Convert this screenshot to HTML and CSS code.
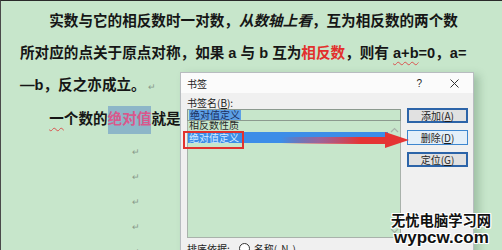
FILE: index.html
```html
<!DOCTYPE html>
<html lang="zh-CN">
<head>
    <meta charset="UTF-8" />
    <title>书签</title>
    <link rel="stylesheet" href="styles.css">
</head>
<body>
<div class="page">
    <div class="doc">
        <p class="para indent">实数与它的相反数时一对数，<span class="kai">从数轴上看</span>，互为相反数的两个数</p>
        <p class="para">所对应的点关于原点对称，如果 a 与 b 互为<span class="red">相反数</span>，则有 <span class="typo">a+b</span>=0，a=</p>
        <p class="para">—b，反之亦成立。<span class="mark">↵</span></p>
        <p class="para indent"><span class="typo">一</span>个数的<span class="hl">绝对值</span>就是数轴上</p>
        <div class="empties">
            <p class="empty"><span class="mark">↵</span></p>
            <p class="empty"><span class="mark">↵</span></p>
            <p class="empty"><span class="mark">↵</span></p>
            <p class="empty"><span class="mark">↵</span></p>
            <p class="empty"><span class="mark">↵</span></p>
        </div>
    </div>

    <div class="dialog">
        <div class="titlebar">
            <span class="title">书签</span>
            <span class="help">?</span>
            <svg class="close" width="9" height="9" viewBox="0 0 9 9"><path d="M0.5 0.5 L8.5 8.5 M8.5 0.5 L0.5 8.5" stroke="#333" stroke-width="1" fill="none"/></svg>
        </div>
        <div class="dlg-body">
            <div class="dlg-left">
                <div class="label">书签名(<u>B</u>):</div>
                <div class="name-input"><span class="sel">绝对值定义</span></div>
                <div class="listbox">
                    <div class="items">
                        <div class="item partial">相反数性质</div>
                        <div class="item selected">绝对值定义</div>
                    </div>
                    <div class="scroll">
                        <svg width="9" height="6" viewBox="0 0 9 6"><path d="M1 5 L4.5 1.5 L8 5" stroke="#a8b4aa" stroke-width="1.2" fill="none"/></svg>
                        <svg width="9" height="6" viewBox="0 0 9 6"><path d="M1 1 L4.5 4.5 L8 1" stroke="#a8b4aa" stroke-width="1.2" fill="none"/></svg>
                    </div>
                </div>
            </div>
            <div class="dlg-buttons">
                <button class="btn strong">添加(<u>A</u>)</button>
                <button class="btn hover">删除(<u>D</u>)</button>
                <button class="btn strong">定位(<u>G</u>)</button>
            </div>
            <div class="sort-row">排序依据: <span class="radio"></span> 名称(<u>N</u>)</div>
        </div>
    </div>

    <div class="redbox"></div>
    <svg class="arrow" width="172" height="20" viewBox="0 0 172 20">
        <defs>
            <linearGradient id="shaft" x1="0" x2="1" y1="0" y2="0">
                <stop offset="0" stop-color="#e23a3a" stop-opacity="0"/>
                <stop offset="0.35" stop-color="#d84a6a" stop-opacity="0.6"/>
                <stop offset="0.75" stop-color="#e53434"/>
                <stop offset="1" stop-color="#e53434"/>
            </linearGradient>
        </defs>
        <rect x="40" y="7" width="106" height="7" fill="url(#shaft)"/>
        <polygon points="144,2 168,10 144,18" fill="#e53434"/>
    </svg>

    <div class="watermark">
        <div class="wm-cn">无忧电脑学习网</div>
        <div class="wm-en">wypcw.com</div>
    </div>
</div>
</body>
</html>
```

FILE: styles.css
```css
html, body { margin: 0; padding: 0; }
body {
    width: 502px; height: 250px; overflow: hidden;
    background: #c7e6cb;
    font-family: "Liberation Sans", "Noto Sans CJK SC", sans-serif;
}
.page {
    position: relative; width: 502px; height: 250px; overflow: hidden;
    box-sizing: border-box; border-top: 1px solid #2a2a2a; border-left: 1px solid #4a4a4a;
}

/* document text */
.doc { padding: 4px 0 0 19px; font-size: 14.6px; font-weight: 700; color: #161616; }
.para { margin: 0; line-height: 32px; white-space: nowrap; }
.indent { text-indent: 2em; }
.kai { font-style: italic; }
.red { color: #e2302c; }
.typo { text-decoration: underline wavy #d9534f; text-decoration-thickness: 1px; text-underline-offset: 3px; }
.hl { background: #8db6c8; color: #d9588c; padding: 5px 0 7px; }
.mark { font-size: 9px; font-weight: 400; color: #8a9a8c; margin-left: 2px; }
.empties { padding: 3px 0 0 112px; }
.empty { margin: 0; height: 25px; line-height: 25px; }
.empty .mark { margin-left: 0; }

/* bookmark dialog */
.dialog {
    position: absolute; left: 179px; top: 71px; width: 292px; height: 190px;
    background: #f0f0f0; border: 1px solid #b8bcc0;
    box-shadow: 5px 3px 8px rgba(40, 80, 50, 0.25);
    font-family: "Noto Sans CJK SC", sans-serif; font-size: 10px; color: #1e1e1e;
}
.titlebar { height: 20px; display: flex; align-items: center; padding: 0 14px 0 6px; background: #fbfbfb; }
.title { flex: 1; }
.help { margin-right: 28px; font-family: "Liberation Sans", sans-serif; font-size: 10px; }
.dlg-body { display: grid; grid-template-columns: 214px 61px; column-gap: 6px; padding: 3px 5px 0 6px; }
.label { height: 13px; line-height: 13px; }
.label u, .btn u, .sort-row u { text-decoration: underline; text-underline-offset: 1px; }
.name-input {
    height: 12px; box-sizing: border-box; border: 1px solid #8c9a8f; background: #c7e6cb;
    display: flex; align-items: center; padding-left: 1px; line-height: 10px;
}
.sel { background: #5c9fe6; color: #1a2e60; padding: 0 1px; }
.listbox {
    height: 117px; box-sizing: border-box; border: 1px solid #a9b2ab; border-top: none;
    background: #c7e6cb; display: grid; grid-template-columns: 1fr 12px; overflow: hidden;
}
.item { height: 11px; line-height: 11px; padding-left: 1px; white-space: nowrap; }
.item.partial { margin-top: -2px; color: #2a2a2a; }
.item.selected { background: #3c8de8; color: #d6ecff; margin-top: 2px; }
.scroll { display: flex; flex-direction: column; justify-content: space-between; align-items: center; padding: 6px 0 3px; }
.dlg-buttons { display: flex; flex-direction: column; gap: 7px; padding-top: 12px; }
.btn {
    height: 15px; padding: 0; box-sizing: border-box;
    font-family: "Noto Sans CJK SC", sans-serif; font-size: 10px; line-height: 11px; color: #1e1e1e;
    background: #e1e1e1; border: 1px solid #2f6fb5;
}
.btn.strong { border: 2px solid #2c64a8; }
.btn.hover { background: #e3eff9; border-color: #3d86cf; }
.sort-row { grid-column: 1 / 3; display: flex; align-items: center; gap: 4px; margin-top: 3px; height: 14px; }
.radio { width: 9px; height: 9px; border: 1px solid #333; border-radius: 50%; background: #fff; margin-left: 5px; }

/* annotations over the screenshot */
.redbox { position: absolute; left: 182px; top: 130px; width: 57px; height: 14px; border: 2px solid #e2322e; }
.arrow { position: absolute; left: 240px; top: 129px; }
.watermark { position: absolute; left: 390px; top: 212px; line-height: 1; }
.wm-cn, .wm-en {
    font-weight: 700; color: #111;
    text-shadow: 1px 0 0 #fff, -1px 0 0 #fff, 0 1px 0 #fff, 0 -1px 0 #fff, 1px 1px 0 #fff, -1px -1px 0 #fff, 1px -1px 0 #fff, -1px 1px 0 #fff;
}
.wm-cn { font-family: "Noto Sans CJK SC", sans-serif; font-size: 14.3px; height: 16px; }
.wm-en { font-family: "Liberation Sans", sans-serif; font-size: 17px; margin-left: 3px; }
```
